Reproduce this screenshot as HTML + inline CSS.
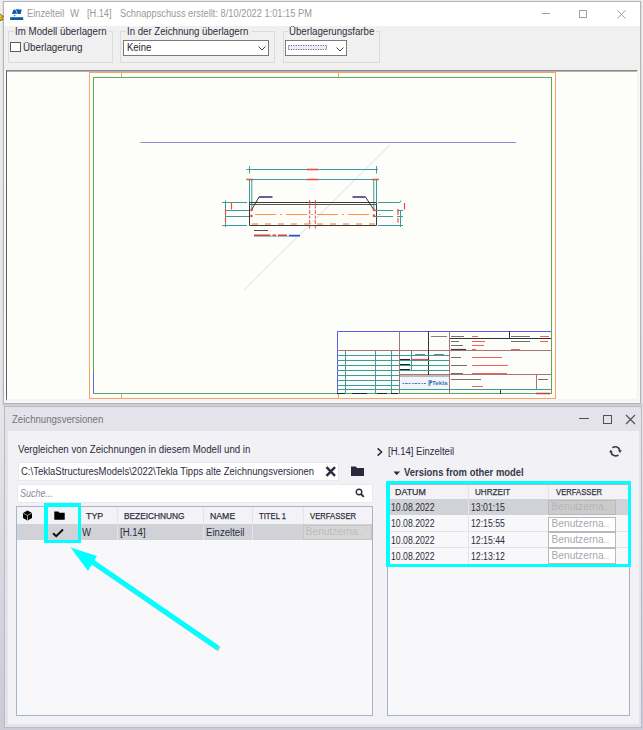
<!DOCTYPE html>
<html><head><meta charset="utf-8">
<style>
*{box-sizing:border-box;margin:0;padding:0}
html,body{width:643px;height:730px;overflow:hidden}
body{position:relative;font-family:"Liberation Sans",sans-serif;background:linear-gradient(#eeeeee 0px,#e6e6ea 400px,#cacad8 730px);}
.a{position:absolute}
.t{position:absolute;white-space:pre;line-height:1}
.hd{color:#303040;-webkit-text-stroke:0.25px #303040;transform-origin:0 0}
</style></head><body>

<!-- ===== top window ===== -->
<div class="a" style="left:3px;top:1px;width:638px;height:403px;background:#f8f8f8;border:1px solid #b4b4b4;box-shadow:0 1px 2px rgba(0,0,0,.15)"></div>
<!-- title bar -->
<div class="a" style="left:4px;top:2px;width:636px;height:24px;background:#ffffff"></div>
<!-- toolbar -->
<div class="a" style="left:4px;top:26px;width:636px;height:44px;background:#f0f0f0"></div>


<!-- title content -->
<svg class="a" style="left:8px;top:6px" width="18" height="18" viewBox="0 0 18 18">
 <rect x="2.1" y="11.2" width="13.1" height="2.8" fill="#0b5ba6"/>
 <path d="M5.1 4.2L7 3.2L9.2 7.8L4 7.9Z" fill="#0b5ba6"/>
 <path d="M7.7 3.2L13.7 3.4L12.7 7.9L9.9 7.9Z" fill="#0b5ba6"/>
 <path d="M5.5 9L7.9 9L6.6 10.5Z" fill="#3a7ec0"/>
</svg>
<svg class="a" style="left:0;top:12px" width="5" height="9" viewBox="0 0 5 9"><path d="M-2 0.5L3.5 4.5L1.8 5.2L2.8 8L0 8.5Z" fill="#f5c000" stroke="#5a4a20" stroke-width="0.7"/></svg>
<div class="t" style="left:26.6px;top:8.75px;font-size:10px;transform:scaleX(0.93);transform-origin:0 0;color:#9a9a9a">Einzelteil</div>
<div class="t" style="left:70.0px;top:8.75px;font-size:10px;transform:scaleX(0.970);transform-origin:0 0;color:#9a9a9a">W</div>
<div class="t" style="left:87.4px;top:8.75px;font-size:10px;transform:scaleX(0.92);transform-origin:0 0;color:#9a9a9a">[H.14]</div>
<div class="t" style="left:120.3px;top:8.75px;font-size:10px;transform:scaleX(0.928);transform-origin:0 0;color:#9a9a9a">Schnappschuss erstellt: 8/10/2022 1:01:15 PM</div>
<div class="a" style="left:542px;top:13px;width:8px;height:1px;background:#a0a0a0"></div>
<div class="a" style="left:579px;top:10px;width:8px;height:8px;border:1px solid #a0a0a0"></div>
<svg class="a" style="left:617px;top:10px" width="9" height="9" viewBox="0 0 9 9"><path d="M0.3 0.3L8.5 8.5M8.5 0.3L0.3 8.5" stroke="#a0a0a0" stroke-width="1"/></svg>

<!-- toolbar groups -->
<div class="a" style="left:8px;top:31px;width:105px;height:32px;border:1px solid #dcdcdc"></div>
<div class="a" style="left:14px;top:27px;width:95px;height:9px;background:#f0f0f0"></div>
<div class="t" style="left:15.3px;top:26.79px;font-size:10px;transform:scaleX(0.975);transform-origin:0 0;color:#2e2e3c">Im Modell überlagern</div>
<div class="a" style="left:10.3px;top:41.8px;width:10.3px;height:9.9px;border:1px solid #5a5a5a;background:#fff"></div>
<div class="t" style="left:23px;top:42.6px;font-size:10px;transform:scaleX(0.980);transform-origin:0 0;color:#2c2c38">Überlagerung</div>

<div class="a" style="left:120px;top:31px;width:155px;height:32px;border:1px solid #dcdcdc"></div>
<div class="a" style="left:126px;top:27px;width:126px;height:9px;background:#f0f0f0"></div>
<div class="t" style="left:127.3px;top:26.70px;font-size:10px;transform:scaleX(0.965);transform-origin:0 0;color:#2e2e3c">In der Zeichnung überlagern</div>
<div class="a" style="left:123px;top:40px;width:146px;height:16px;border:1px solid #7a7a7a;background:#fff"></div>
<div class="t" style="left:126.8px;top:43.08px;font-size:10px;transform:scaleX(0.950);transform-origin:0 0;color:#1e1e1e">Keine</div>
<svg class="a" style="left:258px;top:46px" width="8" height="5" viewBox="0 0 8 5"><path d="M0.5 0.5L4 4L7.5 0.5" stroke="#444" stroke-width="1" fill="none"/></svg>

<div class="a" style="left:283px;top:31px;width:97px;height:32px;border:1px solid #dcdcdc"></div>
<div class="a" style="left:288px;top:27px;width:88px;height:9px;background:#f0f0f0"></div>
<div class="t" style="left:289.3px;top:26.70px;font-size:10px;transform:scaleX(0.965);transform-origin:0 0;color:#2e2e3c">Überlagerungsfarbe</div>
<div class="a" style="left:285px;top:40px;width:62px;height:15.6px;border:1px solid #7a7a7a;background:#fff"></div>
<svg class="a" style="left:287px;top:44px" width="42" height="7" viewBox="0 0 42 7"><rect x="1" y="1" width="39" height="5" fill="#ececfa"/><path d="M1.5 1.5H40M1.5 5.5H40" stroke="#5a5a5a" stroke-width="1" stroke-dasharray="1 1.45"/><path d="M1.5 2.5V5M39.5 2.5V5" stroke="#5a5a5a" stroke-width="1" stroke-dasharray="1 1"/></svg>
<svg class="a" style="left:335.8px;top:46.5px" width="8" height="5" viewBox="0 0 8 5"><path d="M0.5 0.5L4 4L7.5 0.5" stroke="#444" stroke-width="1" fill="none"/></svg>

<!-- canvas -->
<div class="a" id="canvas" style="left:6px;top:70px;width:632px;height:331px;background:#fdfefa;border-top:1px solid #8a8a8a;border-left:1px solid #606060;border-right:1px solid #f4f4f4;border-bottom:2px solid #f4f4f4;box-shadow:inset 0 1px 0 #b4b4b4"></div>


<svg class="a" style="left:0;top:0" width="643" height="730" viewBox="0 0 643 730">
<defs><clipPath id="cc"><rect x="7" y="71" width="630" height="328"/></clipPath></defs>
<g clip-path="url(#cc)" fill="none" stroke-width="1">
 <!-- frames -->
 <rect x="89.5" y="72.5" width="466" height="326" stroke="#f6a466"/>
 <path d="M121.5 72.5V77M338.5 72.5V77M121.5 394V398.5M338.5 394V398.5" stroke="#f6a466"/>
 <rect x="93.5" y="77.5" width="458" height="316" stroke="#5aaa5a"/>
 <path d="M93.5 372V393.5" stroke="#6a6ad0"/>
 <!-- long blue line -->
 <path d="M140.5 142.5H516" stroke="#8c8cd8"/>
 <!-- diagonal -->
 <path d="M244 290L390 145" stroke="#e8e8ed" stroke-width="1.1"/>
 <!-- dims top -->
 <path d="M246.5 169.5H378M249.5 166V173.5M376.5 166V173.5" stroke="#3c9c9c"/>
 <path d="M307 169.5H318" stroke="#f04848" stroke-width="1.6"/>
 <path d="M246.5 179.5H378" stroke="#3c9c9c"/>
 <path d="M307 179.5H318M246.5 179.5H253M372 179.5H379" stroke="#f04848" stroke-width="1.6"/>
 <path d="M249.5 179.5V210M251.8 179.5V210M373.8 179.5V210M376.5 179.5V202" stroke="#3c9c9c"/>
 <!-- part -->
 <path d="M249.5 202.5H376.5V225.5H249.5Z" stroke="#3a3a3a"/>
 <path d="M249.5 204.5H376.5" stroke="#5a5a5a"/>
 <path d="M259 197H272.5M352.5 197H365.5" stroke="#30307a" stroke-width="1.5"/>
 <path d="M259 197L251.5 210M365.5 197L374 210" stroke="#222" stroke-width="0.9"/>
 <path d="M255 214.5H380" stroke="#f6944a" stroke-dasharray="21 4 2 4"/>
 <path d="M252 224H375" stroke="#f6a466" stroke-width="1.6" stroke-dasharray="6 7"/>
 <path d="M309.7 200V229M315.3 200V229" stroke="#f04848" stroke-dasharray="4 1.5 3 1.5"/>
 <circle cx="251.5" cy="210" r="1.3" fill="#f04848" stroke="none"/>
 <circle cx="251.5" cy="216" r="1.3" fill="#f04848" stroke="none"/>
 <circle cx="374" cy="210" r="1.3" fill="#f04848" stroke="none"/>
 <circle cx="374" cy="216" r="1.3" fill="#f04848" stroke="none"/>
 <!-- left dims -->
 <path d="M225.5 200.5V227M222 202.5H247M225 210.5H249M225 216.5H249M222 225.5H247" stroke="#3c9c9c"/>
 <path d="M231.5 203V209.5M225.5 209V215M225.5 218V222" stroke="#f04848" stroke-width="1.2"/>
 <!-- right dims -->
 <path d="M378 202.5H399Q401 202.5 401 200.5M375 210.5H393M375 216.5H393M378 225.5H403M400.5 210V227M397 210.5H403M397 216.5H403" stroke="#3c9c9c"/>
 <path d="M398 209V215M398 218V222.5M404.5 203V209.5" stroke="#f04848" stroke-width="1.2"/>
 <!-- below -->
 <path d="M254 230.5H268" stroke="#505050"/>
 <path d="M254 236.3H300" stroke="#5aa8a8" stroke-width="0.8"/>
 <path d="M254 235.3H287" stroke="#d84040" stroke-width="1.4" stroke-dasharray="16.5 2 3.5 2 11 0"/>
 <path d="M289 235.5H300" stroke="#3050d0" stroke-width="1.5"/>

 <!-- title block -->
 <path d="M337.5 394V331.5H551" stroke="#5a5af0"/>
 <path d="M337 350.5H551M399.5 331V394M449.5 331V394M400 374.5H551M536.5 374.5V389" stroke="#a87474"/>
 <path d="M428.5 331V375M450 338.5H551M509.5 331V338.5M500.5 389V394" stroke="#333"/>
 <path d="M400 376H449" stroke="#555" stroke-width="0.8"/>
 <path d="M345.5 350V394M375.5 350V394M391.5 350V394M411.5 350V370" stroke="#3c9c9c"/>
 <path d="M337 355.5H400M337 360.5H400M337 365.5H400M337 370.5H400M337 375.5H400M337 380.5H400M337 385.5H400M337 389.5H551M400 355.5H449M400 360.5H449M400 365.5H449M400 370.5H449" stroke="#3c9c9c"/>
 <path d="M337 393.5H345M352 393.5H367M377 393.5H387M391 393.5H398M400 359.5H410M400 364.5H410M400 369.5H410" stroke="#222" stroke-width="1.2"/>
 <path d="M411 359.5H428" stroke="#f04848" stroke-width="1.2"/>
 <path d="M415 354.5H425M434 354.5H444M431 336.5H447" stroke="#808080" stroke-width="1.2"/>
 <g stroke-width="1.2">
 <path d="M451 336.5H464M511 336.5H530M451 341.5H459M511 341.5H530M451 345.5H463M451 357.5H461M451 365.5H467M451 373.5H463M451 379.5H481M538 379.5H548" stroke="#707070"/>
 <path d="M451 349.5H466" stroke="#404040"/>
 <path d="M472 336.5H478M540 336.5H549M472 341.5H485M540 341.5H548M472 345.5H484M472 349.5H476M511 349.5H520M472 357.5H502M472 365.5H508M472 373.5H507M472 386.5H483" stroke="#f06060"/>
 <path d="M536 393.5H550" stroke="#c04040" stroke-width="1.5"/>
 </g>
 <rect x="400.5" y="377" width="48.5" height="12" fill="#f2f4fa" stroke="none"/>
 <path d="M402.5 383.5H426" stroke="#4a7cc4" stroke-width="1.1" stroke-dasharray="1.5 0.8 3 0.8 2 1.5"/>
 <text x="428" y="385.3" font-family="Liberation Sans" font-size="6.2" font-weight="700" fill="#3a74bc" stroke="none" textLength="19.5" lengthAdjust="spacingAndGlyphs">⁋Tekla</text>
</g>
</svg>

<!-- ===== bottom panel ===== -->
<div class="a" style="left:3px;top:404px;width:640px;height:2px;background:linear-gradient(#c6c6ce,#d6d6de)"></div>
<div class="a" style="left:4px;top:406px;width:638px;height:322px;background:#e3e3e8;border:1px solid #b9b9c3"></div>
<div class="a" style="left:5px;top:407px;width:636px;height:24px;background:#e3e3e9"></div>
<div class="a" style="left:7.5px;top:431px;width:631px;height:292.5px;background:#f2f2f6"></div>


<div class="t" style="left:12.0px;top:414.6px;font-size:10px;transform:scaleX(0.960);transform-origin:0 0;color:#74747f">Zeichnungsversionen</div>
<div class="a" style="left:579px;top:418px;width:10px;height:1.2px;background:#505060"></div>
<div class="a" style="left:603px;top:415px;width:9px;height:9px;border:1.2px solid #505060"></div>
<svg class="a" style="left:625px;top:414px" width="11" height="11" viewBox="0 0 11 11"><path d="M1 1L10 10M10 1L1 10" stroke="#505060" stroke-width="1.15"/></svg>

<!-- left part -->
<div class="t" style="left:17.5px;top:444.75px;font-size:10px;transform:scaleX(0.970);transform-origin:0 0;color:#2c2c3a">Vergleichen von Zeichnungen in diesem Modell und in</div>
<div class="a" style="left:18.4px;top:461.5px;width:321px;height:19px;background:#fff;border:1px solid #e8e8ee"></div>
<div class="t" style="left:20.5px;top:467.1px;font-size:10px;transform:scaleX(0.950);transform-origin:0 0;color:#2c2c3a">C:\TeklaStructuresModels\2022\Tekla Tipps alte Zeichnungsversionen</div>
<svg class="a" style="left:325px;top:466px" width="12" height="11" viewBox="0 0 12 11"><path d="M1.5 1.2L10 9.8M10 1.2L1.5 9.8" stroke="#2a2a3e" stroke-width="2.4"/></svg>
<svg class="a" style="left:350px;top:465px" width="15" height="12" viewBox="0 0 15 12"><path d="M1 1.5H6L7 3H14V11H1Z" fill="#2a2a3e"/></svg>
<div class="a" style="left:16.5px;top:484px;width:356px;height:18.6px;background:#fff;border:1px solid #e8e8ee"></div>
<div class="t" style="left:20px;top:488.6px;font-size:10px;font-style:italic;transform:scaleX(0.9);transform-origin:0 0;color:#8a8a98">Suche...</div>
<svg class="a" style="left:355px;top:488px" width="10" height="10" viewBox="0 0 10 10"><circle cx="4" cy="4" r="2.8" stroke="#2a2a3e" stroke-width="1.4" fill="none"/><path d="M6 6L8.8 8.8" stroke="#2a2a3e" stroke-width="1.8"/></svg>

<div class="a" style="left:16px;top:506.4px;width:357px;height:209.6px;background:#f8f8fb;border:1px solid #a6b6ca"></div>
<div class="a" style="left:17px;top:507px;width:355px;height:16.5px;background:#f3f3f7"></div>
<div class="a" style="left:17px;top:523.5px;width:355px;height:16.5px;background:#d1d2d7"></div>
<div class="a" style="left:117px;top:507px;width:1px;height:32.5px;background:#e4e4ea"></div>
<div class="a" style="left:203px;top:507px;width:1px;height:32.5px;background:#e4e4ea"></div>
<div class="a" style="left:252px;top:507px;width:1px;height:32.5px;background:#e4e4ea"></div>
<div class="a" style="left:303px;top:507px;width:1px;height:16.5px;background:#e4e4ea"></div>
<svg class="a" style="left:22px;top:510px" width="11" height="11" viewBox="0 0 11 11"><path d="M5.5 0.6L10 3V8L5.5 10.4L1 8V3Z" fill="#000"/><path d="M1.3 3.2L5.5 5.4L9.7 3.2M5.5 5.4V10" stroke="#fff" stroke-width="0.6" fill="none"/></svg>
<svg class="a" style="left:54px;top:511px" width="11" height="9" viewBox="0 0 11 9"><path d="M0.3 0.5H4.3L5.3 1.8H10.7V8.7H0.3Z" fill="#000"/></svg>
<svg class="a" style="left:52px;top:528px" width="12" height="10" viewBox="0 0 12 10"><path d="M1 5.2L4.2 8.2L11 1.5" stroke="#111" stroke-width="2" fill="none"/></svg>
<div class="t hd" style="left:86px;top:511.2px;font-size:9.5px;transform:scaleX(0.935)">TYP</div>
<div class="t hd" style="left:124px;top:511.2px;font-size:9.5px;transform:scaleX(0.876)">BEZEICHNUNG</div>
<div class="t hd" style="left:210px;top:511.2px;font-size:9.5px;transform:scaleX(0.918)">NAME</div>
<div class="t hd" style="left:259px;top:511.2px;font-size:9.5px;transform:scaleX(0.808)">TITEL 1</div>
<div class="t hd" style="left:310px;top:511.2px;font-size:9.5px;transform:scaleX(0.809)">VERFASSER</div>
<div class="t" style="left:82.0px;top:527.58px;font-size:10px;transform:scaleX(0.950);transform-origin:0 0;color:#2c2c3a">W</div>
<div class="t" style="left:119.5px;top:527.6px;font-size:10px;transform:scaleX(0.960);transform-origin:0 0;color:#2c2c3a">[H.14]</div>
<div class="t" style="left:206.0px;top:527.66px;font-size:10px;transform:scaleX(0.960);transform-origin:0 0;color:#2c2c3a">Einzelteil</div>
<div class="a" style="left:303px;top:524.5px;width:68.5px;height:15px;background:#d6d6d6;border:1px solid #c6c6c6"></div>
<div class="t" style="left:305.5px;top:526.8px;font-size:10.2px;color:#bcbcbc">Benutzerna<span style="font-size:7px">...</span></div>

<!-- cyan box left -->
<div class="a" style="left:44px;top:503px;width:37px;height:40px;border:4px solid #00ffff;border-width:4px 3px 3px 4px"></div>

<!-- arrow -->
<svg class="a" style="left:0;top:0" width="643" height="730" viewBox="0 0 643 730">
 <g transform="translate(1.2,1.2)" opacity="0.35"><path d="M218 648L84 556" stroke="#555" stroke-width="5"/></g>
 <path d="M218 648L84 556" stroke="#00ffff" stroke-width="5" stroke-linecap="butt"/>
 <path d="M70.6 547.6L97 556L88 571Z" fill="#00ffff"/>
</svg>

<!-- right part -->
<svg class="a" style="left:376px;top:447px" width="8" height="10" viewBox="0 0 8 10"><path d="M1.6 1.4L5.6 5L1.6 8.6" stroke="#2a2a3e" stroke-width="1.5" fill="none"/></svg>
<div class="t" style="left:387.8px;top:446.66px;font-size:10px;transform:scaleX(0.952);transform-origin:0 0;color:#2c2c3a">[H.14] Einzelteil</div>
<svg class="a" style="left:609px;top:445px" width="13" height="13" viewBox="0 0 13 13"><path d="M3.4 2.8A4.6 4.6 0 0 1 10.9 5.6M9.4 9.8A4.6 4.6 0 0 1 1.9 7" stroke="#3a3a4c" stroke-width="1.6" fill="none"/><path d="M8.9 5.3H12.9L10.9 7.9Z" fill="#3a3a4c"/><path d="M-0.1 7.3H3.9L1.9 4.7Z" fill="#3a3a4c"/></svg>
<svg class="a" style="left:393px;top:471px" width="8" height="5" viewBox="0 0 8 5"><path d="M0.5 0.5H7L3.75 4.2Z" fill="#2a2a3e"/></svg>
<div class="t" style="left:403.5px;top:468.16px;font-size:10px;font-weight:bold;transform:scaleX(0.945);transform-origin:0 0;color:#383846">Versions from other model</div>

<div class="a" style="left:387px;top:484px;width:243px;height:231.5px;background:#f8f8fb;border:1px solid #a6b6ca"></div>
<div class="a" style="left:389px;top:484.5px;width:239px;height:14.5px;background:#f3f3f7"></div>
<div class="a" style="left:389px;top:499px;width:239px;height:15.5px;background:#d1d2d7"></div>
<div class="a" style="left:389px;top:531px;width:239px;height:1px;background:#e2e2e8"></div>
<div class="a" style="left:389px;top:547px;width:239px;height:1px;background:#e2e2e8"></div>
<div class="a" style="left:468px;top:484.5px;width:1px;height:80px;background:#e4e4ea"></div>
<div class="a" style="left:548px;top:484.5px;width:1px;height:15px;background:#e4e4ea"></div>
<div class="t hd" style="left:394.5px;top:486.8px;font-size:9.5px;transform:scaleX(0.931)">DATUM</div>
<div class="t hd" style="left:475px;top:486.8px;font-size:9.5px;transform:scaleX(0.855)">UHRZEIT</div>
<div class="t hd" style="left:555.5px;top:486.8px;font-size:9.5px;transform:scaleX(0.809)">VERFASSER</div>
<div class="t" style="left:390.5px;top:503.0px;font-size:10px;transform:scaleX(0.87);transform-origin:0 0;color:#2c2c3a">10.08.2022</div>
<div class="t" style="left:471px;top:503.0px;font-size:10px;transform:scaleX(0.87);transform-origin:0 0;color:#2c2c3a">13:01:15</div>
<div class="a" style="left:548px;top:499.5px;width:68px;height:15.5px;background:#cbcbcb;border:1px solid #bababa"></div>
<div class="t" style="left:551.5px;top:502.1px;font-size:10.2px;color:#b6b6b6">Benutzerna<span style="font-size:7px">...</span></div>
<div class="t" style="left:390.5px;top:519.0px;font-size:10px;transform:scaleX(0.87);transform-origin:0 0;color:#2c2c3a">10.08.2022</div>
<div class="t" style="left:471px;top:519.0px;font-size:10px;transform:scaleX(0.87);transform-origin:0 0;color:#2c2c3a">12:15:55</div>
<div class="a" style="left:548px;top:516.5px;width:68px;height:15.5px;background:#ffffff;border:1px solid #b9b9b9"></div>
<div class="t" style="left:551.5px;top:519.1px;font-size:10.2px;color:#a6a6ae">Benutzerna<span style="font-size:7px">...</span></div>
<div class="t" style="left:390.5px;top:535.5px;font-size:10px;transform:scaleX(0.87);transform-origin:0 0;color:#2c2c3a">10.08.2022</div>
<div class="t" style="left:471px;top:535.5px;font-size:10px;transform:scaleX(0.87);transform-origin:0 0;color:#2c2c3a">12:15:44</div>
<div class="a" style="left:548px;top:532px;width:68px;height:16px;background:#ffffff;border:1px solid #b9b9b9"></div>
<div class="t" style="left:551.5px;top:534.6px;font-size:10.2px;color:#a6a6ae">Benutzerna<span style="font-size:7px">...</span></div>
<div class="t" style="left:390.5px;top:551.5px;font-size:10px;transform:scaleX(0.87);transform-origin:0 0;color:#2c2c3a">10.08.2022</div>
<div class="t" style="left:471px;top:551.5px;font-size:10px;transform:scaleX(0.87);transform-origin:0 0;color:#2c2c3a">12:13:12</div>
<div class="a" style="left:548px;top:548px;width:68px;height:15.5px;background:#ffffff;border:1px solid #b9b9b9"></div>
<div class="t" style="left:551.5px;top:550.6px;font-size:10.2px;color:#a6a6ae">Benutzerna<span style="font-size:7px">...</span></div>
<div class="a" style="left:386.2px;top:481px;width:245px;height:85.5px;border:4px solid #00ffff;border-width:3.8px 3.4px 3.2px 4px"></div>

</body></html>
